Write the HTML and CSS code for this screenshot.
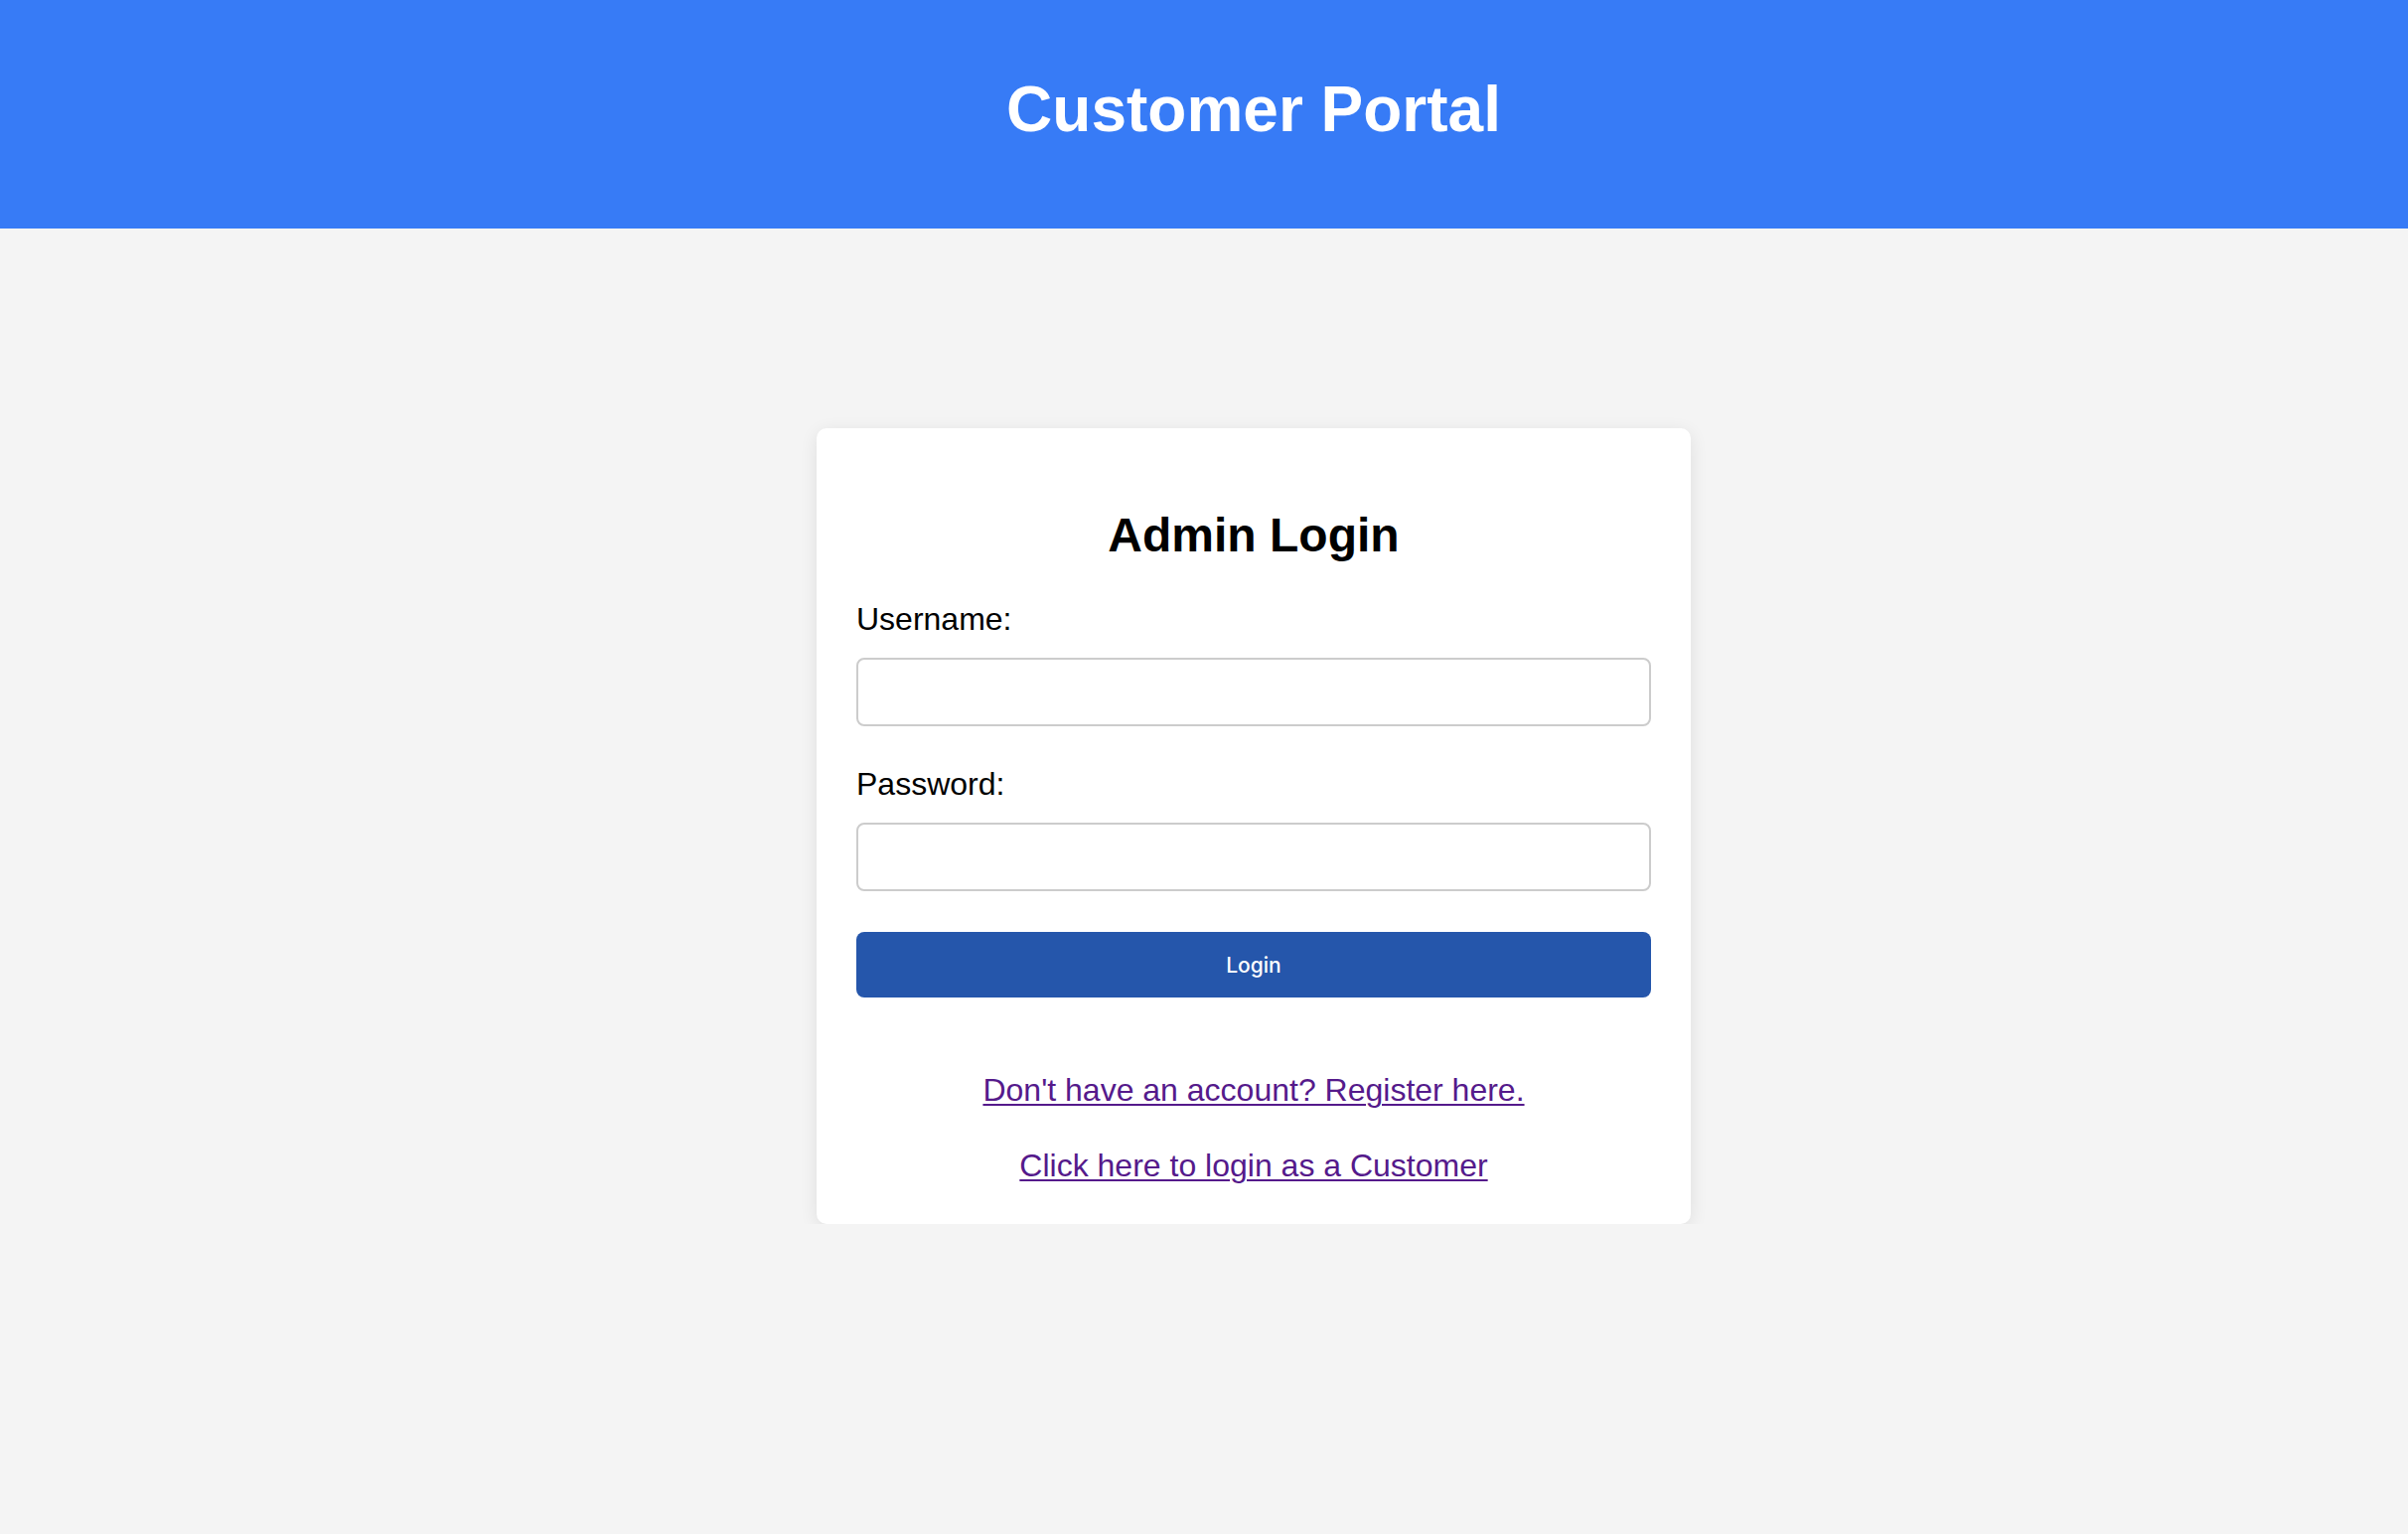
FILE: index.html
```html
<!DOCTYPE html>
<html lang="en">
<head>
<meta charset="utf-8">
<title>Customer Portal</title>
<link rel="stylesheet" href="styles.css">
</head>
<body>
<header class="header">
  <h1 class="header-title">Customer Portal</h1>
</header>
<main class="main">
  <div class="card">
    <h2 class="card-title">Admin Login</h2>
    <form class="form">
      <label class="label" for="username">Username:</label>
      <input class="input input-first" type="text" id="username">
      <label class="label" for="password">Password:</label>
      <input class="input" type="password" id="password">
      <button class="btn" type="button">Login</button>
    </form>
    <p class="link-row link-first"><a class="link" href="#">Don't have an account? Register here.</a></p>
    <p class="link-row"><a class="link" href="#">Click here to login as a Customer</a></p>
  </div>
</main>
</body>
</html>
```

FILE: styles.css
```css
html, body {
  margin: 0;
  padding: 0;
}
body {
  background: #f4f4f4;
  font-family: "Liberation Sans", Arial, Helvetica, sans-serif;
  color: #000;
  overflow: hidden;
}
.header {
  background: #377bf6;
  height: 230px;
  box-sizing: border-box;
  padding: 73px 0 0 100px;
  text-align: center;
  color: #fff;
}
.header-title {
  margin: 0;
  font-size: 64px;
  line-height: 74px;
  font-weight: bold;
}
.main {
  display: flex;
  justify-content: center;
  padding: 201px 0 0 100px;
}
.card {
  width: 880px;
  box-sizing: border-box;
  padding: 40px;
  background: #fff;
  border-radius: 10px;
  box-shadow: 0 4px 18px rgba(0, 0, 0, 0.09);
  display: flex;
  flex-direction: column;
}
.card-title {
  margin: 40px 0 39px;
  font-size: 48px;
  line-height: 55px;
  font-weight: bold;
  text-align: center;
}
.form {
  display: flex;
  flex-direction: column;
}
.label {
  font-size: 32px;
  line-height: 37px;
  margin-bottom: 20px;
}
.input {
  height: 69px;
  box-sizing: border-box;
  border: 2px solid #cccccc;
  border-radius: 8px;
  background: #fff;
  padding: 0 16px;
  font-size: 28px;
  outline: none;
}
.input-first {
  margin-bottom: 40px;
}
.btn {
  margin-top: 41px;
  height: 66px;
  border: none;
  border-radius: 8px;
  background: #2556ab;
  color: #fff;
  font-family: Inter, "Noto Sans", sans-serif;
  font-size: 21px;
  font-weight: 500;
}
.link-row {
  margin: 0;
  text-align: center;
  font-size: 32px;
  line-height: 37px;
}
.link-first {
  margin-top: 75px;
  margin-bottom: 39px;
}
.link {
  color: #551a8b;
  text-decoration: underline;
  text-decoration-thickness: 2px;
  text-underline-offset: 3px;
}
```
